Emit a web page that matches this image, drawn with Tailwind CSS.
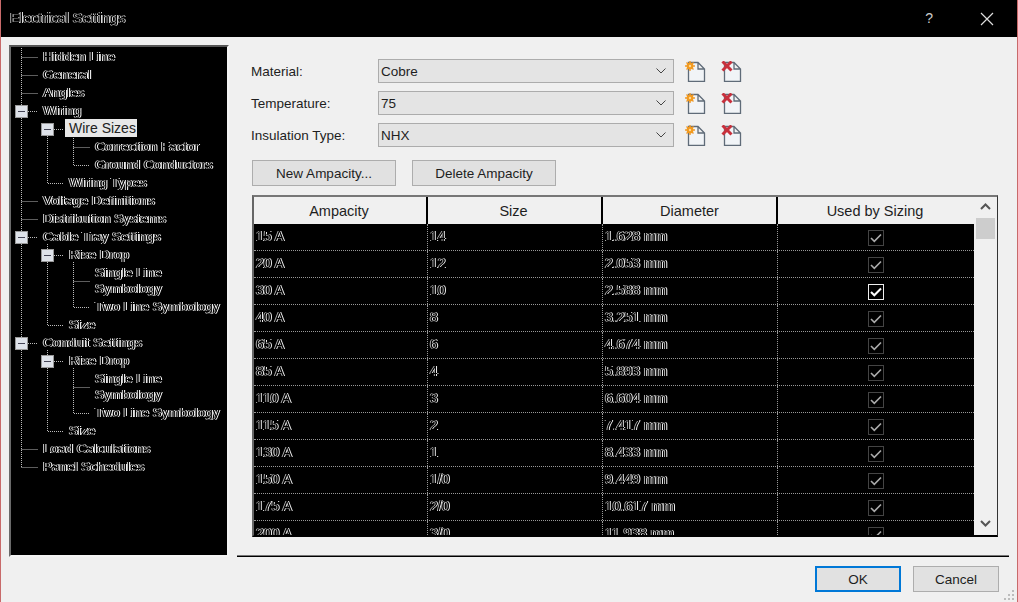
<!DOCTYPE html>
<html lang="en">
<head>
  <meta charset="UTF-8" />
  <title>Electrical Settings</title>
  <script src="https://cdn.jsdelivr.net/npm/@tailwindcss/browser@4"></script>
</head>
<body class="m-0 overflow-hidden bg-[#f0f0f0]">
  <div class="relative flex h-[602px] w-[1018px] flex-col border-x border-x-[#c86a6a] bg-[#f0f0f0] font-['Liberation_Sans',sans-serif] text-[13.5px] text-[#1e1e1e]">

    <!-- Title bar -->
    <div class="flex h-[37px] shrink-0 items-center bg-black pl-[9px] pr-[23px]">
      <span class="text-[14.5px] text-black [will-change:transform] [text-shadow:1px_0_#ddd,-1px_0_#aaa]">Electrical Settings</span>
      <span class="ml-auto mr-[47px] text-[14px] text-[#ccc]">?</span>
      <svg width="14" height="14" viewBox="0 0 14 14" class="stroke-[#ddd]"><path d="M1 1 13 13M13 1 1 13" fill="none" stroke-width="1.2"/></svg>
    </div>

    <div class="flex min-h-0 flex-1">
      <!-- Tree -->
      <div class="relative ml-[8px] mt-[8px] h-[512px] w-[220px] shrink-0 border-y-2 border-l-2 border-r-2 border-t-[#555] border-r-[#f4f4f4] border-b-[#f4f4f4] border-l-[#6a6a6a] bg-black">
        <svg class="absolute left-[-1px] top-[-2px]" width="219" height="512" viewBox="10 45 219 512" fill="none">
          <g stroke="#bbb" stroke-dasharray="1 1">
            <path d="M21.5 48V467.5M21.5 57.5H38M21.5 75.5H38M21.5 93.5H38M28 111.5H38M21.5 201.5H38M21.5 219.5H38M28 237.5H38M28 343.5H38M21.5 449.5H38M21.5 467.5H38"/>
            <path d="M47.5 136V183.5H64M54 129.5H64M73.5 136V165.5H90M73.5 147.5H90"/>
            <path d="M47.5 244V325.5H64M54 255.5H64M73.5 262V307.5H90M73.5 281.5H90"/>
            <path d="M47.5 350V431.5H64M54 361.5H64M73.5 368V413.5H90M73.5 387.5H90"/>
          </g>
          <g fill="#dfe3ea" stroke="#999">
            <rect x="15.5" y="105.5" width="12" height="12"/><rect x="41.5" y="123.5" width="12" height="12"/>
            <rect x="15.5" y="231.5" width="12" height="12"/><rect x="41.5" y="249.5" width="12" height="12"/>
            <rect x="15.5" y="337.5" width="12" height="12"/><rect x="41.5" y="355.5" width="12" height="12"/>
          </g>
          <path stroke="#445" d="M18 111.5H25M44 129.5H51M18 237.5H25M44 255.5H51M18 343.5H25M44 361.5H51"/>
        </svg>
        <ul id="tree" class="relative text-[13.5px] leading-[18px] text-black"></ul>
      </div>

      <!-- Right panel -->
      <div class="ml-[22px] flex w-[747px] flex-col pt-[22px]">
        <div class="flex h-[24px] items-center">
          <span class="w-[127px] pt-[2px]">Material:</span>
          <div class="flex h-[24px] w-[296px] items-center justify-between border border-[#acacac] bg-[#e4e4e4] pl-[2px] pr-[7px] pt-[2px]">Cobre
            <svg class="mb-[2px]" width="10" height="6" viewBox="0 0 10 6" fill="none" stroke="#444"><path d="M0.5 0.5 5 5 9.5 0.5"/></svg>
          </div>
          <svg class="ml-[11px] mt-px" width="21" height="21" viewBox="0 0 21 21"><path d="M3.5 1.5H13L19.5 8V20.5H3.5Z M13 1.5V8H19.5" fill="#f1f4f7" stroke="#5f6b78" stroke-width="1.3"/><path d="M5 0V10M0 5H10M1.5 1.5 8.5 8.5M8.5 1.5 1.5 8.5" stroke="#ee9a2c" stroke-width="1.4"/><circle cx="5" cy="5" r="3.4" fill="#f29a1f"/><circle cx="5" cy="5" r="1.2" fill="#ffd894"/></svg>
          <svg class="ml-[15px] mt-px" width="21" height="21" viewBox="0 0 21 21"><path d="M3.5 1.5H13L19.5 8V20.5H3.5Z M13 1.5V8H19.5" fill="#f1f4f7" stroke="#5f6b78" stroke-width="1.3"/><path d="M1.5 0.5 10.5 9.5M10.5 0.5 1.5 9.5" stroke="#c8303c" stroke-width="3"/></svg>
        </div>
        <div class="mt-[8px] flex h-[24px] items-center">
          <span class="w-[127px] pt-[2px]">Temperature:</span>
          <div class="flex h-[24px] w-[296px] items-center justify-between border border-[#acacac] bg-[#e4e4e4] pl-[2px] pr-[7px] pt-[2px]">75
            <svg class="mb-[2px]" width="10" height="6" viewBox="0 0 10 6" fill="none" stroke="#444"><path d="M0.5 0.5 5 5 9.5 0.5"/></svg>
          </div>
          <svg class="ml-[11px]" width="21" height="21" viewBox="0 0 21 21"><path d="M3.5 1.5H13L19.5 8V20.5H3.5Z M13 1.5V8H19.5" fill="#f1f4f7" stroke="#5f6b78" stroke-width="1.3"/><path d="M5 0V10M0 5H10M1.5 1.5 8.5 8.5M8.5 1.5 1.5 8.5" stroke="#ee9a2c" stroke-width="1.4"/><circle cx="5" cy="5" r="3.4" fill="#f29a1f"/><circle cx="5" cy="5" r="1.2" fill="#ffd894"/></svg>
          <svg class="ml-[15px]" width="21" height="21" viewBox="0 0 21 21"><path d="M3.5 1.5H13L19.5 8V20.5H3.5Z M13 1.5V8H19.5" fill="#f1f4f7" stroke="#5f6b78" stroke-width="1.3"/><path d="M1.5 0.5 10.5 9.5M10.5 0.5 1.5 9.5" stroke="#c8303c" stroke-width="3"/></svg>
        </div>
        <div class="mt-[8px] flex h-[24px] items-center">
          <span class="w-[127px] pt-[2px]">Insulation Type:</span>
          <div class="flex h-[24px] w-[296px] items-center justify-between border border-[#acacac] bg-[#e4e4e4] pl-[2px] pr-[7px] pt-[2px]">NHX
            <svg class="mb-[2px]" width="10" height="6" viewBox="0 0 10 6" fill="none" stroke="#444"><path d="M0.5 0.5 5 5 9.5 0.5"/></svg>
          </div>
          <svg class="ml-[11px]" width="21" height="21" viewBox="0 0 21 21"><path d="M3.5 1.5H13L19.5 8V20.5H3.5Z M13 1.5V8H19.5" fill="#f1f4f7" stroke="#5f6b78" stroke-width="1.3"/><path d="M5 0V10M0 5H10M1.5 1.5 8.5 8.5M8.5 1.5 1.5 8.5" stroke="#ee9a2c" stroke-width="1.4"/><circle cx="5" cy="5" r="3.4" fill="#f29a1f"/><circle cx="5" cy="5" r="1.2" fill="#ffd894"/></svg>
          <svg class="ml-[15px]" width="21" height="21" viewBox="0 0 21 21"><path d="M3.5 1.5H13L19.5 8V20.5H3.5Z M13 1.5V8H19.5" fill="#f1f4f7" stroke="#5f6b78" stroke-width="1.3"/><path d="M1.5 0.5 10.5 9.5M10.5 0.5 1.5 9.5" stroke="#c8303c" stroke-width="3"/></svg>
        </div>

        <div class="ml-px mt-[13px] flex gap-[16px]">
          <button class="h-[26px] w-[144px] border border-[#adadad] bg-[#e1e1e1] pt-[2px]">New Ampacity...</button>
          <button class="h-[26px] w-[144px] border border-[#adadad] bg-[#e1e1e1] pt-[2px]">Delete Ampacity</button>
        </div>

        <!-- Table -->
        <div class="ml-px mt-[9px] flex h-[342px] w-[746px] border-y-2 border-l-2 border-r border-t-[#777] border-r-[#333] border-b-black border-l-[#666]">
          <div class="flex w-[720px] flex-col overflow-hidden">
            <div class="flex h-[27px] shrink-0 items-center bg-[#f0f0f0] text-center text-[14.5px]">
              <div class="flex h-full w-[174px] items-center justify-center border-r-2 border-black pr-[2px] pt-[2px]">Ampacity</div>
              <div class="flex h-full w-[175px] items-center justify-center border-r-2 border-black pr-[2px] pt-[2px]">Size</div>
              <div class="flex h-full w-[175px] items-center justify-center border-r-2 border-black pt-[2px]">Diameter</div>
              <div class="flex h-full flex-1 items-center justify-center pr-[2px] pt-[2px]">Used by Sizing</div>
            </div>
            <div id="rows" class="min-h-0 flex-1 overflow-hidden bg-black text-[14px] text-black"></div>
          </div>
          <!-- Scrollbar -->
          <div class="flex flex-1 flex-col items-center bg-[#f0f0f0]">
            <svg class="mt-[6px]" width="11" height="7" viewBox="0 0 11 7" fill="none" stroke="#555" stroke-width="2"><path d="M1 6 5.5 1.5 10 6"/></svg>
            <div class="mt-[8px] h-[21px] w-[19px] bg-[#cdcdcd]"></div>
            <svg class="mb-[8px] mt-auto" width="11" height="7" viewBox="0 0 11 7" fill="none" stroke="#555" stroke-width="2"><path d="M1 1 5.5 5.5 10 1"/></svg>
          </div>
        </div>
      </div>
    </div>

    <!-- Footer -->
    <div class="absolute bottom-[45px] left-[236px] right-[8px] h-[2px] border-t border-t-[#777] border-b border-b-black"></div>
    <div class="flex h-[46px] shrink-0 justify-end gap-[12px] pr-[18px] pt-[10px]">
      <button class="h-[26px] w-[86px] border-2 border-[#0078d7] bg-[#e1e1e1] pt-[2px]">OK</button>
      <button class="h-[26px] w-[86px] border border-[#adadad] bg-[#e1e1e1] pt-[2px]">Cancel</button>
    </div>
    <svg class="absolute bottom-px right-[2px]" width="11" height="11" viewBox="0 0 11 11" fill="#bcbcbc"><rect x="8" y="0" width="2" height="2"/><rect x="4" y="4" width="2" height="2"/><rect x="8" y="4" width="2" height="2"/><rect x="0" y="8" width="2" height="2"/><rect x="4" y="8" width="2" height="2"/><rect x="8" y="8" width="2" height="2"/></svg>
  </div>

  <script>
    const treeItems = [
      ["Hidden Line", 0], ["General", 0], ["Angles", 0], ["Wiring", 0],
      ["Wire Sizes", 1, "selected"], ["Correction Factor", 2], ["Ground Conductors", 2], ["Wiring Types", 1],
      ["Voltage Definitions", 0], ["Distribution Systems", 0],
      ["Cable Tray Settings", 0], ["Rise Drop", 1], ["Single Line<br>Symbology", 2, "tall"], ["Two Line Symbology", 2], ["Size", 1],
      ["Conduit Settings", 0], ["Rise Drop", 1], ["Single Line<br>Symbology", 2, "tall"], ["Two Line Symbology", 2], ["Size", 1],
      ["Load Calculations", 0], ["Panel Schedules", 0]
    ];
    const indent = ["pl-[32px]", "pl-[58px]", "pl-[84px]"];
    const ghost = "[will-change:transform] [text-shadow:1px_0_#fff,-1px_0_#ccc]";
    document.getElementById("tree").innerHTML = treeItems.map(([label, level, kind]) => {
      if (kind === "selected") {
        return `<li class="h-[18px] pl-[54px]"><span class="block h-[18px] w-[72px] bg-[#e8e8e8] pl-[4px] text-[14px] text-[#222]">${label}</span></li>`;
      }
      const tall = kind === "tall" ? "h-[34px] leading-[16px] pt-[2px]" : "h-[18px] pt-px";
      return `<li class="${indent[level]} ${tall} whitespace-nowrap ${ghost}">${label}</li>`;
    }).join("");

    const tableRows = [
      ["15 A", "14", "1.628 mm"], ["20 A", "12", "2.053 mm"], ["30 A", "10", "2.588 mm", true], ["40 A", "8", "3.251 mm"],
      ["65 A", "6", "4.674 mm"], ["85 A", "4", "5.893 mm"], ["110 A", "3", "6.604 mm"], ["115 A", "2", "7.417 mm"],
      ["130 A", "1", "8.433 mm"], ["150 A", "1/0", "9.449 mm"], ["175 A", "2/0", "10.617 mm"], ["200 A", "3/0", "11.938 mm"]
    ];
    const cell = "flex h-full items-start pl-[2px] pt-[2px] border-r border-dotted border-r-[#999]";
    const cellText = "[will-change:transform] [text-shadow:1px_0_#eee,-1px_0_#aaa]";
    document.getElementById("rows").innerHTML = tableRows.map(([amp, size, dia, active]) => `
      <div class="flex h-[27px] border-b border-dotted border-b-[#999]">
        <div class="${cell} w-[174px]"><span class="${cellText}">${amp}</span></div>
        <div class="${cell} w-[175px]"><span class="${cellText}">${size}</span></div>
        <div class="${cell} w-[175px]"><span class="${cellText}">${dia}</span></div>
        <div class="flex h-full flex-1 items-center justify-center pt-[1px]">
          <svg width="16" height="16" viewBox="0 0 16 16" fill="none">
            ${active
              ? '<rect x="0.5" y="0.5" width="15" height="15" stroke="#eee"/><path d="M3 8 6.3 11.3 13 4.5" stroke="#fff" stroke-width="2"/>'
              : '<rect x="0.5" y="0.5" width="15" height="15" stroke="#444"/><path d="M3 8 6.3 11.3 13 4.5" stroke="#aaa" stroke-width="1.6"/>'}
          </svg>
        </div>
      </div>`).join("");
  </script>
</body>
</html>
